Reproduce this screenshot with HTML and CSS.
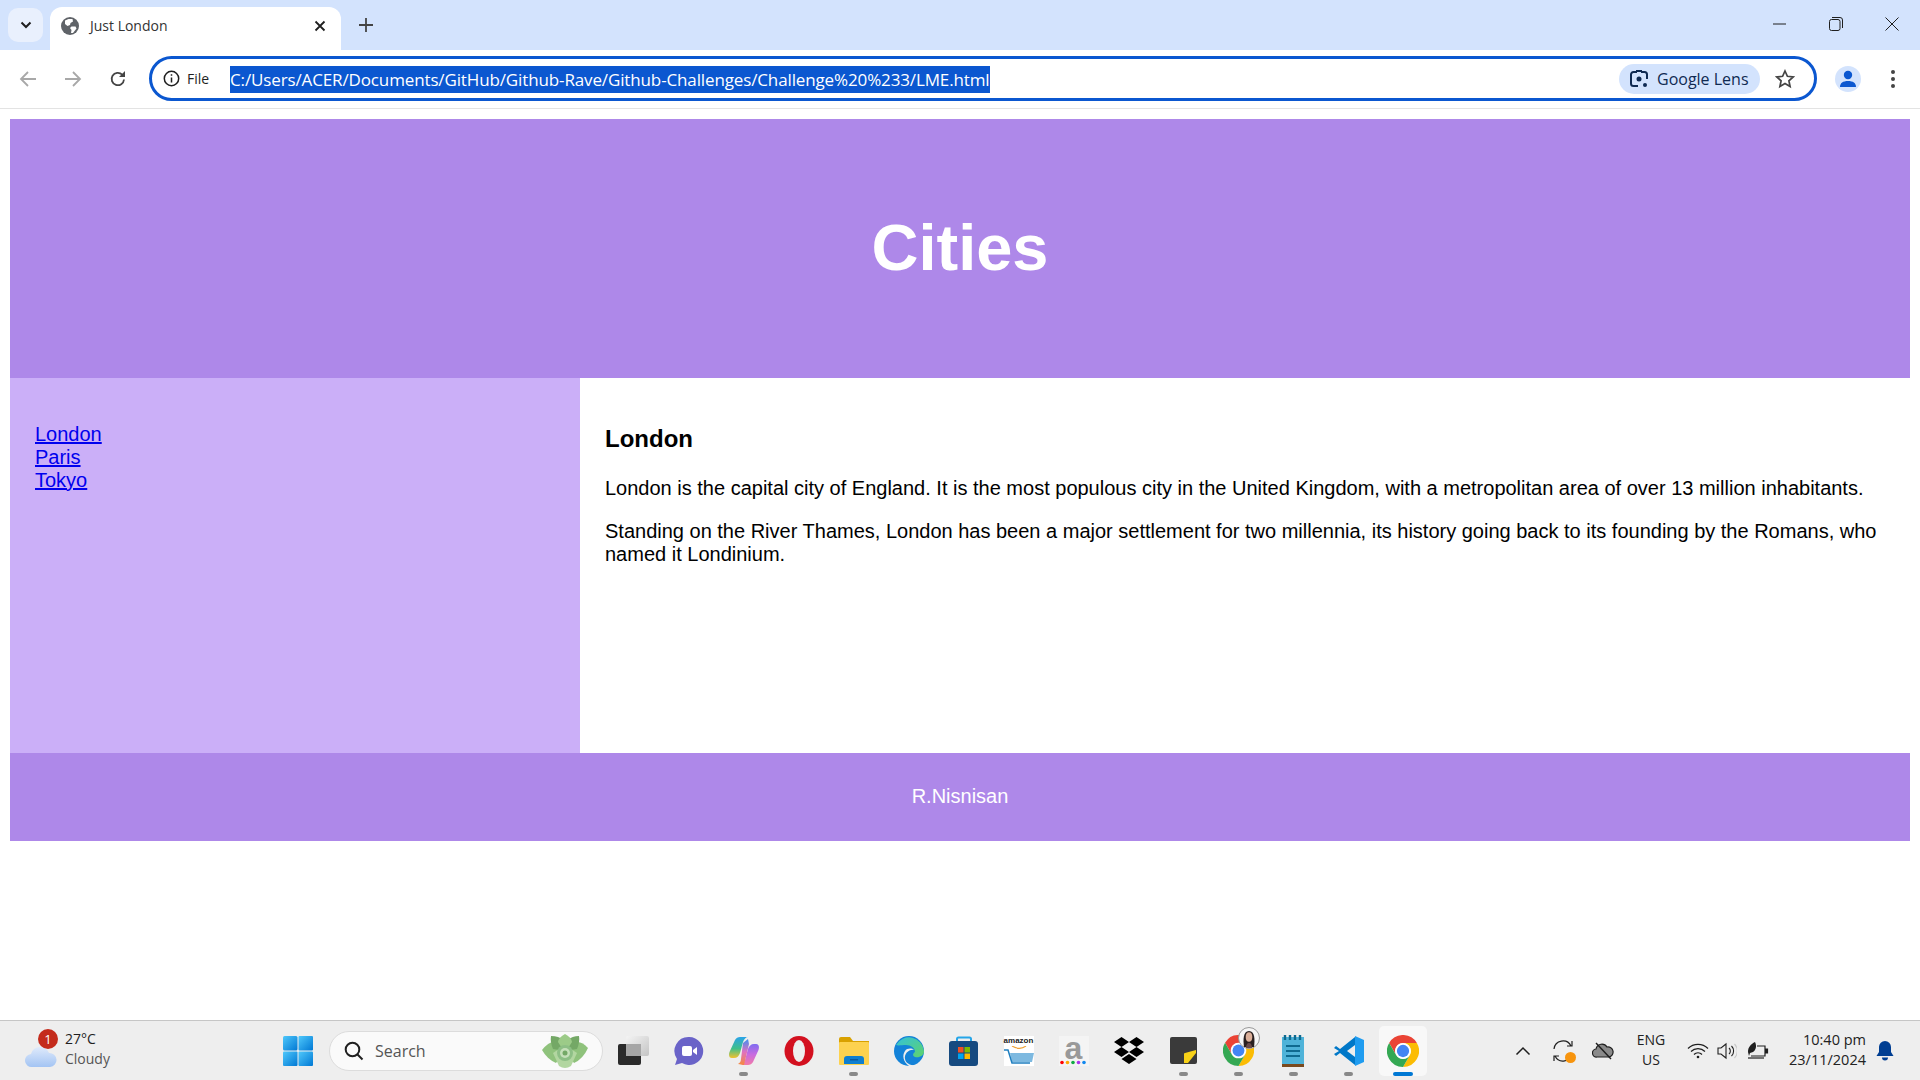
FILE: index.html
```html
<!DOCTYPE html>
<html lang="en">

<head>
    <meta charset="UTF-8">
    <title>Just London</title>
    <link rel="stylesheet" href="styles.css">
</head>

<body>
<svg class="defs" width="0" height="0">
    <defs>
        <symbol id="chrome" viewBox="0 0 48 48">
            <path fill="#ea4335" d="M3.2 12A24 24 0 0 1 44.8 12H24A12 12 0 0 0 13.6 30Z"/>
            <path fill="#fbbc04" d="M24 12H44.8A24 24 0 0 1 24 48L34.4 30A12 12 0 0 0 24 12Z"/>
            <path fill="#34a853" d="M3.2 12A24 24 0 0 0 24 48L34.4 30A12 12 0 0 1 13.6 30Z"/>
            <circle cx="24" cy="24" r="11.5" fill="#fff"/>
            <circle cx="24" cy="24" r="9.2" fill="#4285f4"/>
        </symbol>
        <linearGradient id="copilotA" x1="0" y1="0" x2="0" y2="1">
            <stop offset="0" stop-color="#2aa3e8"/>
            <stop offset=".55" stop-color="#3fc08a"/>
            <stop offset="1" stop-color="#f2c12e"/>
        </linearGradient>
        <linearGradient id="copilotB" x1="0" y1="0" x2="0" y2="1">
            <stop offset="0" stop-color="#7f6cf0"/>
            <stop offset=".5" stop-color="#c86be0"/>
            <stop offset="1" stop-color="#f27aa8"/>
        </linearGradient>
        <linearGradient id="copilotC" x1="0" y1="0" x2="0" y2="1">
            <stop offset="0" stop-color="#3f8ff0"/>
            <stop offset=".5" stop-color="#e070c0"/>
            <stop offset="1" stop-color="#f58a3a"/>
        </linearGradient>
        <linearGradient id="edgeA" x1="0" y1="0" x2="1" y2="1">
            <stop offset="0" stop-color="#35c1d8"/>
            <stop offset="1" stop-color="#5fd36a"/>
        </linearGradient>
        <linearGradient id="startA" x1="0" y1="0" x2="1" y2="1">
            <stop offset="0" stop-color="#4fc8fb"/>
            <stop offset="1" stop-color="#0078d4"/>
        </linearGradient>
        <linearGradient id="cloudA" x1="0" y1="0" x2="0" y2="1">
            <stop offset="0" stop-color="#dfeafb"/>
            <stop offset="1" stop-color="#a3c4f3"/>
        </linearGradient>
        <linearGradient id="taskA" x1="0" y1="0" x2="1" y2="1">
            <stop offset="0" stop-color="#f4f4f4"/>
            <stop offset="1" stop-color="#c4c4c4"/>
        </linearGradient>
    </defs>
</svg>

<div class="tabstrip">
    <div class="tab-search">
        <svg width="14" height="14" viewBox="0 0 14 14"><path d="M2.5 4.5 7 9l4.5-4.5" fill="none" stroke="#1f1f1f" stroke-width="2"/></svg>
    </div>
    <div class="tab">
        <svg class="favicon" width="18" height="18" viewBox="0 0 18 18">
            <circle cx="9" cy="9" r="9" fill="#5f6368"/>
            <path fill="#fff" d="M4 3.5 7.5 2h4l.5 2.5L9.5 6 9 8 6.5 9 4 7ZM10.5 9.5h4l1 2-3.5 4.5h-2l.5-3-1.500-2Z"/>
        </svg>
        <span class="tab-title">Just London</span>
        <svg class="tab-close" width="12" height="12" viewBox="0 0 12 12"><path d="M1.500 1.500l9 9m0-9-9 9" stroke="#1f1f1f" stroke-width="1.800"/></svg>
    </div>
    <svg class="new-tab" width="14" height="14" viewBox="0 0 14 14"><path d="M7 0v14M0 7h14" stroke="#444" stroke-width="1.800"/></svg>
    <div class="window-controls">
        <svg width="14" height="14" viewBox="0 0 14 14"><path d="M0 7h13" stroke="#1f1f1f" stroke-width="1"/></svg>
        <svg width="14" height="14" viewBox="0 0 14 14" fill="none" stroke="#1f1f1f" stroke-width="1"><rect x=".5" y="2.500" width="10.500" height="11" rx="2"/><path d="M3 .5h8a2.500 2.500 0 0 1 2.500 2.500v8"/></svg>
        <svg width="14" height="14" viewBox="0 0 14 14"><path d="M.5.5l13 13m0-13-13 13" stroke="#1f1f1f" stroke-width="1"/></svg>
    </div>
</div>

<div class="toolbar">
    <svg class="nav-btn" width="18" height="18" viewBox="0 0 18 18" fill="none" stroke="#a8a8a8" stroke-width="1.800"><path d="M17 9H2M9 2 2 9l7 7"/></svg>
    <svg class="nav-btn" width="18" height="18" viewBox="0 0 18 18" fill="none" stroke="#a8a8a8" stroke-width="1.800"><path d="M1 9h15M9 2l7 7-7 7"/></svg>
    <svg class="nav-btn" width="18" height="18" viewBox="0 0 18 18" fill="none" stroke="#444" stroke-width="1.800"><path d="M15 9.500A6.200 6.200 0 1 1 13.200 4.600"/><path fill="#444" stroke="none" d="M16 1v6h-6Z"/></svg>
    <div class="omnibox">
        <svg class="info-icon" width="17" height="17" viewBox="0 0 17 17" fill="none" stroke="#1f1f1f" stroke-width="1.500"><circle cx="8.500" cy="8.500" r="7.200"/><path d="M8.500 7.500v5M8.500 4.200v1.600"/></svg>
        <span class="chip-file">File</span>
        <span class="url">C:/Users/ACER/Documents/GitHub/Github-Rave/Github-Challenges/Challenge%20%233/LME.html</span>
        <div class="lens">
            <svg width="20" height="20" viewBox="0 0 20 20" fill="none" stroke="#0f2a52" stroke-width="2"><path d="M8 3H4.500A2.500 2.500 0 0 0 2 5.500v9A2.500 2.500 0 0 0 4.500 17H9M12 3h3.500A2.500 2.500 0 0 1 18 5.500V10"/><circle cx="10" cy="10" r="2.500" fill="#0f2a52" stroke="none"/><circle cx="16" cy="16" r="2" fill="#0f2a52" stroke="none"/><path d="M7 2h6"/></svg>
            <span>Google Lens</span>
        </div>
        <svg class="star" width="20" height="20" viewBox="0 0 20 20" fill="none" stroke="#444" stroke-width="1.700"><path d="M10 2l2.400 5.300 5.800.6-4.300 3.900 1.200 5.700L10 14.600l-5.100 2.900 1.200-5.700L1.800 7.900l5.800-.6Z"/></svg>
    </div>
    <div class="avatar">
        <svg width="18" height="18" viewBox="0 0 18 18" fill="#0b57d0"><circle cx="9" cy="5" r="4.200"/><path d="M1 17c0-4 3-6 8-6s8 2 8 6Z"/></svg>
    </div>
    <svg class="menu-dots" width="4" height="18" viewBox="0 0 4 18" fill="#444"><circle cx="2" cy="2" r="2"/><circle cx="2" cy="9" r="2"/><circle cx="2" cy="16" r="2"/></svg>
</div>

<div class="viewport">
    <header class="site-header">
        <h1>Cities</h1>
    </header>
    <section class="site-middle">
        <nav class="site-nav">
            <a href="#">London</a>
            <a href="#">Paris</a>
            <a href="#">Tokyo</a>
        </nav>
        <article class="site-content">
            <h2>London</h2>
            <p>London is the capital city of England. It is the most populous city in the United Kingdom, with a metropolitan area of over 13 million inhabitants.</p>
            <p>Standing on the River Thames, London has been a major settlement for two millennia, its history going back to its founding by the Romans, who named it Londinium.</p>
        </article>
    </section>
    <footer class="site-footer">R.Nisnisan</footer>
</div>

<div class="taskbar">
    <div class="weather">
        <div class="weather-icon">
            <svg width="32" height="24" viewBox="0 0 32 24"><path fill="url(#cloudA)" d="M7 23a6.500 6.500 0 0 1-1-13A9.500 9.500 0 0 1 24 9a7 7 0 0 1 1 14Z"/></svg>
            <span class="weather-badge">1</span>
        </div>
        <div class="weather-text">
            <span>27°C</span>
            <span class="muted">Cloudy</span>
        </div>
    </div>
    <svg class="start" width="30" height="30" viewBox="0 0 30 30">
        <rect width="14.500" height="14.500" rx="1.500" fill="url(#startA)"/>
        <rect x="15.500" width="14.500" height="14.500" rx="1" fill="url(#startA)"/>
        <rect y="15.500" width="14.500" height="14.500" rx="1" fill="url(#startA)"/>
        <rect x="15.500" y="15.500" width="14.500" height="14.500" rx="1" fill="url(#startA)"/>
    </svg>
    <div class="searchbox">
        <svg width="20" height="20" viewBox="0 0 20 20" fill="none" stroke="#1f1f1f" stroke-width="2"><circle cx="8.500" cy="8.500" r="6.800"/><path d="M13.500 13.500 18.500 18.500"/></svg>
        <span>Search</span>
        <svg class="succulent" width="48" height="36" viewBox="0 0 48 36">
            <path fill="#8fc27c" d="M1 17Q8 8 14 9L24 18 15 30Q6 26 1 17Z"/>
            <path fill="#8fc27c" d="M47 15Q41 8 35 9L24 18 33 30Q42 26 47 15Z"/>
            <path fill="#74a866" d="M10 3Q18 3 22 7L24 18 12 16Q9 9 10 3Z"/>
            <path fill="#74a866" d="M38 3Q31 3 27 7L24 18 36 16Q39 9 38 3Z"/>
            <path fill="#9ccb88" d="M24 1Q30 4 31 9L24 20 17 9Q18 4 24 1Z"/>
            <path fill="#b2d6a0" d="M12 20 24 12 36 20 30 33Q24 37 18 33Z"/>
            <circle cx="24" cy="20" r="8" fill="#8dbf85"/>
            <circle cx="24" cy="20" r="5" fill="#c6e0ba"/>
            <circle cx="24" cy="20" r="2.500" fill="#74a866"/>
        </svg>
    </div>
    <div class="apps">
        <div class="app">
            <svg width="32" height="30" viewBox="0 0 32 30"><rect x="8" y="0" width="23" height="20" rx="2" fill="url(#taskA)"/><rect y="8" width="23" height="21" rx="2" fill="#2a2a2a"/><rect x="8" y="8" width="15" height="12" fill="#a6a6a6"/></svg>
        </div>
        <div class="app">
            <svg width="30" height="30" viewBox="0 0 30 30"><path fill="#6a63c8" d="M15 1a14 14 0 1 1-7 26L1 29l2-6A14 14 0 0 1 15 1Z"/><rect x="8" y="10" width="10" height="10" rx="2" fill="#fff"/><path fill="#fff" d="M19 14l4-3v8l-4-3Z"/></svg>
        </div>
        <div class="app has-dot">
            <svg width="30" height="30" viewBox="0 0 30 30">
                <path fill="url(#copilotA)" d="M11 1h8c-2 0-4 2-5 5l-3 11c-1 3-3 5-6 5H3C0 22-.5 19 .5 16L6 4c1-2 3-3 5-3Z"/>
                <path fill="url(#copilotB)" d="M19 29h-8c2 0 4-2 5-5l3-11c1-3 3-5 6-5h2c3 0 3.500 3 2.500 6L24 26c-1 2-3 3-5 3Z"/>
                <path fill="url(#copilotC)" d="M14 7 19 3l1 5-5 21-6-1c2-1 3-3 3-5Z"/>
            </svg>
        </div>
        <div class="app">
            <svg width="30" height="30" viewBox="0 0 30 30"><ellipse cx="15" cy="15" rx="14.500" ry="15" fill="#d3101f"/><ellipse cx="15" cy="15" rx="6" ry="11" fill="#eeeeee"/></svg>
        </div>
        <div class="app has-dot">
            <svg width="30" height="28" viewBox="0 0 30 28"><path fill="#d9a100" d="M0 2a2 2 0 0 1 2-2h9l3 4h16v5H0Z"/><rect y="5" width="30" height="23" rx="1" fill="#fdd24f"/><path fill="#0f7fd0" d="M5 27v-5a3 3 0 0 1 3-3h14a3 3 0 0 1 3 3v5Z"/><rect x="11" y="22" width="8" height="1.500" fill="#0a5aa0"/></svg>
        </div>
        <div class="app">
            <svg width="30" height="30" viewBox="0 0 30 30"><circle cx="15" cy="15" r="15" fill="#1382d8"/><path fill="url(#edgeA)" d="M2 9A15 15 0 0 1 30 15c0 5-5 7-9 6-3-1-2-4 0-5 0-4-4-7-9-7-4 0-8 1-10 0Z"/><path fill="#eeeeee" d="M22 30c-3-1-10-1-11-7-1-5 4-10 9-9-2-2-7-2-9 1-3 4-2 11 4 15Z"/></svg>
        </div>
        <div class="app">
            <svg width="30" height="30" viewBox="0 0 30 30"><path d="M8 7V3a1.500 1.500 0 0 1 1.500-1.500h11A1.500 1.500 0 0 1 22 3v4" fill="none" stroke="#25a5e8" stroke-width="2"/><rect y="5" width="29" height="25" rx="3" fill="#164a80"/><rect x="9" y="11" width="5.500" height="5.500" fill="#f25022"/><rect x="15.500" y="11" width="5.500" height="5.500" fill="#7fba00"/><rect x="9" y="17.500" width="5.500" height="5.500" fill="#00a4ef"/><rect x="15.500" y="17.500" width="5.500" height="5.500" fill="#ffb900"/></svg>
        </div>
        <div class="app">
            <div class="amazon">
                <span>amazon</span>
                <svg width="30" height="20" viewBox="0 0 30 20"><path d="M8 0c5 3 10 3 14 0" fill="none" stroke="#f0a030" stroke-width="1.200"/><path fill="#7db9e0" d="M6 7h24l-2 9H8Z"/><path d="M0 4h4l4 13h18" fill="none" stroke="#1f7fc0" stroke-width="1.500"/></svg>
            </div>
        </div>
        <div class="app">
            <div class="amazon-a">
                <span>a</span>
                <svg width="30" height="5" viewBox="0 0 30 5"><circle cx="3" cy="2.500" r="1.800" fill="#f00"/><circle cx="8.500" cy="2.500" r="1.800" fill="#fa0"/><circle cx="14" cy="2.500" r="1.800" fill="#1a4"/><circle cx="19.500" cy="2.500" r="1.800" fill="#a3e"/><circle cx="25" cy="2.500" r="1.800" fill="#18e"/></svg>
            </div>
        </div>
        <div class="app">
            <svg width="30" height="27" viewBox="0 0 30 27"><path d="M7.500 0 15 5 7.500 10 0 5ZM22.500 0 30 5l-7.500 5L15 5ZM7.500 10 15 15l-7.500 5L0 15ZM22.500 10 30 15l-7.500 5L15 15ZM15 17l7.500 5L15 27l-7.500-5Z"/></svg>
        </div>
        <div class="app has-dot">
            <svg width="28" height="28" viewBox="0 0 28 28"><rect width="27" height="27" rx="2" fill="#3a3a3a"/><path fill="#f7d117" d="M14 26V17a1 1 0 0 1 1-1L26 13V16L18 26Z"/></svg>
        </div>
        <div class="app has-dot">
            <div class="chrome-user">
                <svg width="31" height="31"><use href="#chrome"/></svg>
                <svg class="user-photo" width="22" height="22" viewBox="0 0 22 22">
                    <circle cx="11" cy="11" r="10.500" fill="#f6f6f6" stroke="#999"/>
                    <path fill="#2a2020" d="M6 20c-1-7-1-16 5-16s6 9 5 16Z"/>
                    <ellipse cx="11" cy="10" rx="3.300" ry="4.800" fill="#dcb09a"/>
                    <path fill="#6a4a4a" d="M8 21c0-3 1-5 3-5s3 2 3 5Z"/>
                </svg>
            </div>
        </div>
        <div class="app has-dot">
            <svg width="24" height="32" viewBox="0 0 24 32"><rect y="2" width="22" height="28" fill="#4fb3d9"/><rect y="29" width="22" height="3" fill="#7a4a1e"/><path d="M3 0v5M8 0v5M13 0v5M18 0v5" stroke="#0f6a90" stroke-width="2.400"/><path d="M4 11h14M4 16h14M4 21h14" stroke="#0f6a90" stroke-width="2"/></svg>
        </div>
        <div class="app has-dot">
            <svg width="30" height="30" viewBox="0 0 30 30"><path fill="#0078c8" d="M21 1v28L6 17l-4 3-2-2 5-3-5-3 2-2 4 3Z"/><path fill="#0078c8" d="M8 15l13-10v4l-8 6 8 6v4Z"/><path fill="#1f9cf0" d="M21 0l9 4v22l-9 4Z"/><path fill="#eeeeee" d="M21 9v12l-8-6Z"/></svg>
        </div>
        <div class="app app-active">
            <svg width="32" height="32"><use href="#chrome"/></svg>
        </div>
    </div>
    <div class="tray">
        <svg width="16" height="10" viewBox="0 0 16 10"><path d="M1.500 8.500 8 2l6.500 6.500" fill="none" stroke="#1f1f1f" stroke-width="1.500"/></svg>
        <div class="sync">
            <svg width="22" height="22" viewBox="0 0 22 22" fill="none" stroke="#1f1f1f" stroke-width="1.200"><path d="M2 9a9 9 0 0 1 17-3M20 1v5h-5M20 13a9 9 0 0 1-17 3M2 21v-5h5"/></svg>
            <span class="sync-dot"></span>
        </div>
        <svg width="22" height="18" viewBox="0 0 22 18"><path fill="#8a8a8a" stroke="#1f1f1f" stroke-width="1.200" d="M5 15a4 4 0 0 1-1-8 6 6 0 0 1 11-2 5 5 0 0 1 2 10Z"/><path d="M4 1l15 16" stroke="#1f1f1f" stroke-width="1.400"/></svg>
        <div class="lang"><span>ENG</span><span>US</span></div>
        <svg width="22" height="16" viewBox="0 0 22 16" fill="none" stroke="#1f1f1f" stroke-width="1.200"><path d="M1 5.500a14 14 0 0 1 20 0M4 8.500a10 10 0 0 1 14 0M7 11.500a5.500 5.500 0 0 1 8 0"/><circle cx="11" cy="14" r="1.300" fill="#1f1f1f" stroke="none"/></svg>
        <svg width="20" height="18" viewBox="0 0 20 18" fill="none" stroke="#1f1f1f" stroke-width="1.100"><path d="M1 6h3l5-4v14l-5-4H1Z"/><path d="M12 6a4 4 0 0 1 0 6M14.500 4a7 7 0 0 1 0 10"/><path d="M17.500 2a10 10 0 0 1 0 14" stroke="#c8c8c8"/></svg>
        <svg width="22" height="18" viewBox="0 0 22 18" fill="none" stroke="#1f1f1f" stroke-width="1.200"><path d="M10 4h8v10H4"/><path d="M18 7h2.500v4H18" fill="#1f1f1f"/><path d="M1 16h16"/><path fill="#1f1f1f" stroke="none" d="M1 10C1 5 4 2 8 0c2 4 1 8-2 10l-3 1-1 3Z"/></svg>
        <div class="clock"><span>10:40 pm</span><span>23/11/2024</span></div>
        <svg width="18" height="20" viewBox="0 0 18 20" fill="#003e92"><path d="M9 0a6 6 0 0 1 6 6v5l2.500 4H.5L3 11V6a6 6 0 0 1 6-6Z"/><path d="M6 16.500h6a3 3 0 0 1-6 0Z"/></svg>
    </div>
</div>
</body>

</html>
```

FILE: styles.css
```css
body {
    margin: 0;
    height: 1080px;
    overflow: hidden;
    display: flex;
    flex-direction: column;
    background-color: #fff;
    font-family: 'Open Sans', sans-serif;
    color: #1f1f1f;
}

.defs {
    position: absolute;
}

/* browser tabs */
.tabstrip {
    height: 50px;
    flex: none;
    display: flex;
    align-items: flex-end;
    background-color: #d3e3fd;
}

.tab-search {
    width: 35px;
    height: 34px;
    margin: 0 7px 8px 8px;
    display: flex;
    align-items: center;
    justify-content: center;
    background-color: #e9f0fd;
    border-radius: 10px;
}

.tab {
    width: 291px;
    height: 43px;
    padding: 0 15px 6px 11px;
    box-sizing: border-box;
    display: flex;
    align-items: center;
    background-color: #fff;
    border-radius: 12px 12px 0 0;
}

.favicon {
    margin-right: 11px;
}

.tab-title {
    flex: 1;
    font-size: 14px;
    color: #333;
}

.new-tab {
    margin: 0 0 18px 18px;
}

.window-controls {
    margin-left: auto;
    padding-right: 21px;
    display: flex;
    gap: 42px;
    margin-bottom: 19px;
}

/* address bar */
.toolbar {
    height: 59px;
    flex: none;
    box-sizing: border-box;
    padding: 0 0 1px 19px;
    display: flex;
    align-items: center;
    background-color: #fff;
    border-bottom: 1px solid #e3e3e3;
    border-radius: 10px 10px 0 0;
}

.nav-btn {
    margin-right: 27px;
}

.omnibox {
    width: 1668px;
    height: 45px;
    margin-left: -5px;
    box-sizing: border-box;
    padding: 0 19px 0 11px;
    display: flex;
    align-items: center;
    border: 3px solid #0b57d0;
    border-radius: 23px;
}

.info-icon {
    margin-right: 7px;
}

.chip-file {
    font-size: 14px;
    width: 43px;
}

.url {
    margin-top: 2px;
    font-size: 17px;
    line-height: 27px;
    letter-spacing: -0.13px;
    white-space: nowrap;
    color: #fff;
    background-color: #0b57d0;
}

.lens {
    margin-left: auto;
    height: 30px;
    width: 141px;
    box-sizing: border-box;
    padding-left: 10px;
    display: flex;
    align-items: center;
    gap: 8px;
    font-size: 16px;
    color: #0f2a52;
    background-color: #d3e3fd;
    border-radius: 15px;
}

.star {
    margin-left: 15px;
}

.avatar {
    width: 26px;
    height: 26px;
    margin-left: 18px;
    display: flex;
    align-items: center;
    justify-content: center;
    background-color: #d3e3fd;
    border-radius: 50%;
}

.menu-dots {
    margin-left: 30px;
}

/* the page itself */
.viewport {
    flex: 1;
    padding: 10px 10px 0;
    font-family: 'Liberation Sans', Arial, sans-serif;
    font-size: 20px;
    line-height: 23px;
    color: #000;
}

.site-header {
    height: 259px;
    box-sizing: border-box;
    padding-bottom: 2px;
    display: flex;
    align-items: center;
    justify-content: center;
    background-color: #ae88e9;
}

.site-header h1 {
    margin: 0;
    font-size: 65px;
    line-height: 72px;
    color: #fff;
}

.site-middle {
    height: 375px;
    display: flex;
}

.site-nav {
    width: 570px;
    box-sizing: border-box;
    padding: 45px 25px;
    display: flex;
    flex-direction: column;
    background-color: #cbaff8;
}

.site-nav a {
    color: #0000ee;
    align-self: flex-start;
    text-decoration-thickness: 2px;
}

.site-content {
    flex: 1;
    padding: 25px;
}

.site-content h2 {
    margin: 22px 0 25px;
    font-size: 24px;
    line-height: 27px;
}

.site-content p {
    margin: 0 0 20px;
}

.site-footer {
    height: 88px;
    box-sizing: border-box;
    padding-bottom: 2px;
    display: flex;
    align-items: center;
    justify-content: center;
    color: #fff;
    background-color: #ae88e9;
}

/* windows taskbar */
.taskbar {
    height: 60px;
    flex: none;
    box-sizing: border-box;
    display: flex;
    align-items: center;
    background-color: #eeeeee;
    border-top: 1px solid #c6c6c6;
}

.weather {
    width: 283px;
    box-sizing: border-box;
    padding-left: 25px;
    display: flex;
    align-items: center;
    gap: 8px;
}

.weather-icon {
    position: relative;
    height: 34px;
    display: flex;
    align-items: flex-end;
}

.weather-badge {
    position: absolute;
    top: -5px;
    right: -1px;
    width: 20px;
    height: 20px;
    line-height: 20px;
    text-align: center;
    font-size: 13px;
    color: #fff;
    background-color: #c42b1c;
    border-radius: 50%;
}

.weather-text {
    padding-bottom: 3px;
    display: flex;
    flex-direction: column;
    font-size: 14px;
    line-height: 20px;
}

.muted {
    color: #555;
}

.start {
    flex: none;
}

.searchbox {
    width: 274px;
    height: 40px;
    margin-left: 16px;
    flex: none;
    box-sizing: border-box;
    padding: 0 13px 0 14px;
    display: flex;
    align-items: center;
    gap: 11px;
    font-size: 16px;
    color: #555;
    background-color: #fafafa;
    border: 1px solid #dcdcdc;
    border-radius: 20px;
}

.succulent {
    margin-left: auto;
}

.apps {
    margin-left: 3px;
    display: flex;
}

.app {
    position: relative;
    width: 55px;
    height: 50px;
    display: flex;
    align-items: center;
    justify-content: center;
}

.has-dot::after {
    content: "";
    position: absolute;
    left: 23px;
    bottom: 0;
    width: 9px;
    height: 4px;
    background-color: #888;
    border-radius: 2px;
}

.app-active {
    width: 48px;
    margin: 0 3px;
    background-color: #f8f8f8;
    border-radius: 5px;
}

.app-active::after {
    content: "";
    position: absolute;
    left: 14px;
    bottom: 0;
    width: 20px;
    height: 4px;
    background-color: #0078d4;
    border-radius: 2px;
}

.amazon {
    width: 30px;
    height: 30px;
    display: flex;
    flex-direction: column;
    align-items: center;
    background-color: #fff;
    font-family: 'Liberation Sans', sans-serif;
    font-size: 8px;
    font-weight: bold;
    line-height: 10px;
    color: #222;
}

.amazon-a {
    width: 30px;
    height: 30px;
    display: flex;
    flex-direction: column;
    align-items: center;
    background-color: #f4f4f4;
    font-family: 'Liberation Sans', sans-serif;
    font-size: 32px;
    font-weight: bold;
    line-height: 24px;
    color: #999;
}

.chrome-user {
    position: relative;
    display: flex;
}

.user-photo {
    position: absolute;
    top: -8px;
    right: -6px;
}

.tray {
    margin-left: auto;
    padding-right: 20px;
    display: grid;
    grid-template-columns: 40px 40px 40px 56px 38px 20px 42px 91px 30px;
    align-items: center;
    justify-items: center;
    font-size: 14px;
    color: #222;
}

.sync {
    position: relative;
    display: flex;
}

.sync-dot {
    position: absolute;
    right: -2px;
    bottom: -1px;
    width: 11px;
    height: 11px;
    background-color: #f7940d;
    border-radius: 50%;
}

.lang,
.clock {
    padding-bottom: 2px;
    display: flex;
    flex-direction: column;
    line-height: 20px;
    text-align: center;
}

.clock {
    justify-self: end;
    padding-right: 4px;
    font-size: 14.5px;
    text-align: right;
    white-space: nowrap;
}
```
